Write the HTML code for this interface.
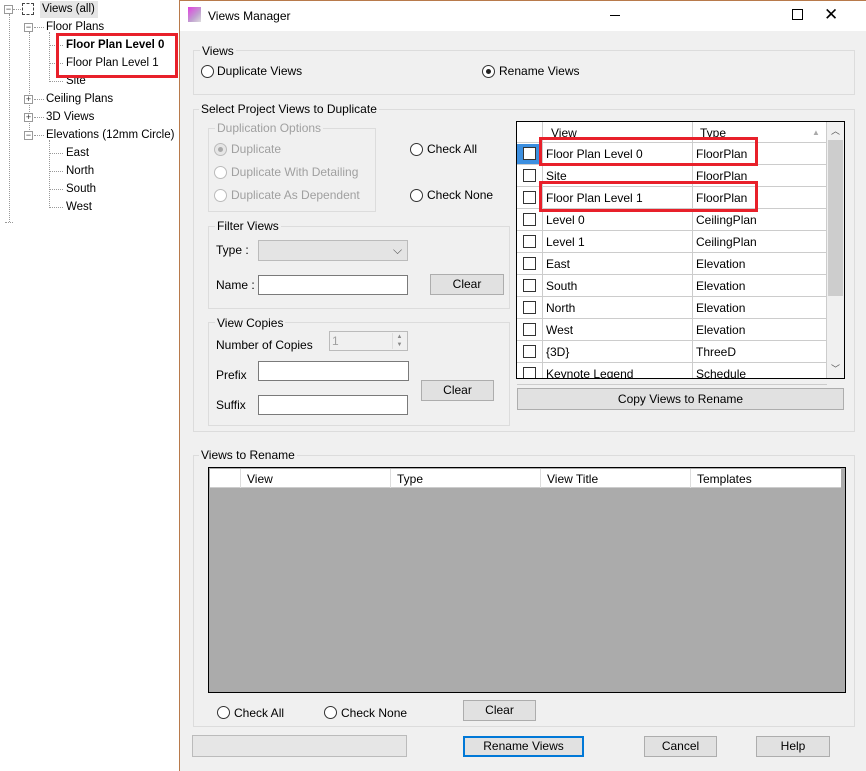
<!DOCTYPE html>
<html><head><meta charset="utf-8"><style>
*{box-sizing:border-box;margin:0;padding:0}
body{width:866px;height:771px;position:relative;overflow:hidden;background:#fff;font-family:"Liberation Sans",sans-serif;font-size:12px;color:#000}
.a{position:absolute}
.t{position:absolute;white-space:nowrap;line-height:14px}
.tr .t{font-size:11.5px}
.g{position:absolute;border:1px solid #dcdcdc}
.lbl{position:absolute;background:#f0f0f0;padding:0 2px;line-height:14px;white-space:nowrap}
.rad{position:absolute;width:13px;height:13px;border:1px solid #333;border-radius:50%;background:#fff}
.btn{position:absolute;border:1px solid #adadad;background:#e1e1e1;text-align:center;line-height:18px}
.inp{position:absolute;border:1px solid #7a7a7a;background:#fff}
.dis{color:#a0a0a0}
.cb{position:absolute;width:13px;height:13px;border:1px solid #333;background:#fff}
.red{position:absolute;border:3px solid #e8202a}
.dot{position:absolute;border-top:1px dotted #999}
.vd{position:absolute;border-left:1px dotted #999}
.pm{position:absolute;width:9px;height:9px;border:1px solid #999;background:#fff;font-size:9px;line-height:7px;text-align:center;color:#333}
</style></head><body>
<div class="tr">
<div class="a" style="left:0;top:0;width:179px;height:771px;background:#fff"></div>
<div class="vd" style="left:9px;top:14px;height:208px"></div>
<div class="dot" style="left:5px;top:222px;width:8px"></div>
<div class="pm" style="left:4px;top:5px">−</div>
<div class="dot" style="left:13px;top:9px;width:8px"></div>
<div class="a" style="left:22px;top:3px;width:12px;height:12px;border:1px dashed #444"></div>
<div class="a" style="left:40px;top:1px;width:58px;height:17px;background:#e5e5e5"></div>
<div class="t" style="left:42px;top:2px">Views (all)</div>
<div class="vd" style="left:29px;top:32px;height:104px"></div>
<div class="pm" style="left:24px;top:23px">−</div><div class="dot" style="left:34px;top:27px;width:10px"></div>
<div class="t" style="left:46px;top:20px">Floor Plans</div>
<div class="vd" style="left:49px;top:32px;height:50px"></div>
<div class="dot" style="left:49px;top:45px;width:14px"></div>
<div class="dot" style="left:49px;top:63px;width:14px"></div>
<div class="dot" style="left:49px;top:81px;width:14px"></div>
<div class="t" style="left:66px;top:38px;font-weight:bold">Floor Plan Level 0</div>
<div class="t" style="left:66px;top:56px">Floor Plan Level 1</div>
<div class="t" style="left:66px;top:74px">Site</div>
<div class="red" style="left:56px;top:33px;width:122px;height:45px"></div>
<div class="pm" style="left:24px;top:95px">+</div><div class="dot" style="left:34px;top:99px;width:10px"></div>
<div class="t" style="left:46px;top:92px">Ceiling Plans</div>
<div class="pm" style="left:24px;top:113px">+</div><div class="dot" style="left:34px;top:117px;width:10px"></div>
<div class="t" style="left:46px;top:110px">3D Views</div>
<div class="pm" style="left:24px;top:131px">−</div><div class="dot" style="left:34px;top:135px;width:10px"></div>
<div class="t" style="left:46px;top:128px">Elevations (12mm Circle)</div>
<div class="vd" style="left:49px;top:140px;height:68px"></div>
<div class="dot" style="left:49px;top:153px;width:14px"></div><div class="t" style="left:66px;top:146px">East</div>
<div class="dot" style="left:49px;top:171px;width:14px"></div><div class="t" style="left:66px;top:164px">North</div>
<div class="dot" style="left:49px;top:189px;width:14px"></div><div class="t" style="left:66px;top:182px">South</div>
<div class="dot" style="left:49px;top:207px;width:14px"></div><div class="t" style="left:66px;top:200px">West</div>
</div>

<div class="a" style="left:179px;top:0;width:687px;height:771px;background:#f0f0f0;border-left:1px solid #b87a4b;border-top:1px solid #b87a4b"></div>
<div class="a" style="left:180px;top:1px;width:686px;height:30px;background:#fff"></div>
<div class="a" style="left:188px;top:7px;width:13px;height:15px;background:linear-gradient(135deg,#e040e0,#c0a0d0 60%,#ddd)"></div>
<div class="t" style="left:208px;top:9px">Views Manager</div>
<div class="a" style="left:610px;top:15px;width:10px;border-top:1px solid #000"></div>
<div class="a" style="left:792px;top:9px;width:11px;height:11px;border:1px solid #000"></div>
<div class="t" style="left:824px;top:5px;font-size:17px;line-height:20px">✕</div>

<div class="g" style="left:193px;top:50px;width:662px;height:45px"></div>
<div class="lbl" style="left:200px;top:44px">Views</div>
<div class="rad" style="left:201px;top:65px"></div><div class="t" style="left:217px;top:64px">Duplicate Views</div>
<div class="rad" style="left:482px;top:65px"><div class="a" style="left:3px;top:3px;width:5px;height:5px;border-radius:50%;background:#222"></div></div><div class="t" style="left:499px;top:64px">Rename Views</div>

<div class="g" style="left:193px;top:109px;width:662px;height:323px"></div>
<div class="lbl" style="left:199px;top:102px">Select Project Views to Duplicate</div>
<div class="g" style="left:208px;top:128px;width:168px;height:84px"></div>
<div class="lbl dis" style="left:215px;top:121px">Duplication Options</div>
<div class="rad" style="left:214px;top:143px;border-color:#bbb;background:#e6e6e6"><div class="a" style="left:3px;top:3px;width:5px;height:5px;border-radius:50%;background:#aaa"></div></div><div class="t dis" style="left:231px;top:142px">Duplicate</div>
<div class="rad" style="left:214px;top:166px;border-color:#bbb"></div><div class="t dis" style="left:231px;top:165px">Duplicate With Detailing</div>
<div class="rad" style="left:214px;top:189px;border-color:#bbb"></div><div class="t dis" style="left:231px;top:188px">Duplicate As Dependent</div>
<div class="rad" style="left:410px;top:143px"></div><div class="t" style="left:427px;top:142px">Check All</div>
<div class="rad" style="left:410px;top:189px"></div><div class="t" style="left:427px;top:188px">Check None</div>

<div class="g" style="left:208px;top:226px;width:302px;height:83px"></div>
<div class="lbl" style="left:215px;top:219px">Filter Views</div>
<div class="t" style="left:216px;top:243px">Type :</div>
<div class="a" style="left:258px;top:240px;width:150px;height:21px;border:1px solid #bbb;background:#e4e4e4"></div>
<div class="t" style="left:393px;top:243px;color:#555">⌵</div>
<div class="t" style="left:216px;top:278px">Name :</div>
<div class="inp" style="left:258px;top:275px;width:150px;height:20px"></div>
<div class="btn" style="left:430px;top:274px;width:74px;height:21px">Clear</div>

<div class="g" style="left:208px;top:322px;width:302px;height:104px"></div>
<div class="lbl" style="left:215px;top:316px">View Copies</div>
<div class="t" style="left:216px;top:338px">Number of Copies</div>
<div class="a" style="left:329px;top:331px;width:79px;height:20px;border:1px solid #bbb;background:#f0f0f0"></div>
<div class="t dis" style="left:332px;top:334px">1</div>
<div class="a" style="left:392px;top:333px;width:14px;height:16px;border-left:1px solid #ddd;font-size:6px;color:#888;line-height:8px;text-align:center">▲<br>▼</div>
<div class="t" style="left:216px;top:368px">Prefix</div>
<div class="inp" style="left:258px;top:361px;width:151px;height:20px"></div>
<div class="t" style="left:216px;top:398px">Suffix</div>
<div class="inp" style="left:258px;top:395px;width:150px;height:20px"></div>
<div class="btn" style="left:421px;top:380px;width:73px;height:21px">Clear</div>

<div class="a" style="left:516px;top:121px;width:329px;height:258px;border:1px solid #000;background:#fff;overflow:hidden">
 <div class="a" style="left:0;top:0;width:310px;height:21px;border-bottom:1px solid #ccc"></div>
 <div class="t" style="left:34px;top:4px">View</div><div class="t" style="left:183px;top:4px">Type</div>
 <div class="t" style="left:295px;top:4px;font-size:8px;color:#aaa">▲</div>
 <div class="a" style="left:25px;top:0;height:260px;border-left:1px solid #ccc"></div>
 <div class="a" style="left:175px;top:0;height:260px;border-left:1px solid #ccc"></div>
 <div class="a" style="left:309px;top:0;height:260px;border-left:1px solid #ccc"></div>
 <div class="a" style="left:0;top:22px;width:25px;height:21px;background:#3c8fe0"></div>
</div>
<div class="a" style="left:827px;top:122px;width:17px;height:256px;background:#f0f0f0"></div>
<div class="a" style="left:828px;top:140px;width:15px;height:156px;background:#cdcdcd"></div>
<div class="t" style="left:831px;top:124px;font-size:9px;color:#555">︿</div>
<div class="t" style="left:831px;top:362px;font-size:9px;color:#555">﹀</div>

<div id="rows"></div>
<div class="red" style="left:539px;top:137px;width:219px;height:29px"></div>
<div class="red" style="left:539px;top:181px;width:219px;height:31px"></div>
<div class="btn" style="left:517px;top:388px;width:327px;height:22px;line-height:20px">Copy Views to Rename</div>

<div class="g" style="left:193px;top:455px;width:662px;height:272px"></div>
<div class="lbl" style="left:199px;top:448px">Views to Rename</div>
<div class="a" style="left:208px;top:467px;width:638px;height:226px;border:1px solid #000;background:#ababab">
 <div class="a" style="left:1px;top:1px;width:631px;height:19px;background:#fff;border-bottom:1px solid #ccc"></div>
 <div class="a" style="left:31px;top:1px;height:19px;border-left:1px solid #ddd"></div>
 <div class="a" style="left:181px;top:1px;height:19px;border-left:1px solid #ddd"></div>
 <div class="a" style="left:331px;top:1px;height:19px;border-left:1px solid #ddd"></div>
 <div class="a" style="left:481px;top:1px;height:19px;border-left:1px solid #ddd"></div>
 <div class="t" style="left:38px;top:4px">View</div><div class="t" style="left:188px;top:4px">Type</div>
 <div class="t" style="left:338px;top:4px">View Title</div><div class="t" style="left:488px;top:4px">Templates</div>
</div>
<div class="rad" style="left:217px;top:706px"></div><div class="t" style="left:234px;top:706px">Check All</div>
<div class="rad" style="left:324px;top:706px"></div><div class="t" style="left:341px;top:706px">Check None</div>
<div class="btn" style="left:463px;top:700px;width:73px;height:21px">Clear</div>

<div class="a" style="left:192px;top:735px;width:215px;height:22px;border:1px solid #bbb;background:#e6e6e6"></div>
<div class="btn" style="left:463px;top:736px;width:121px;height:21px;border:2px solid #0078d7;line-height:17px">Rename Views</div>
<div class="btn" style="left:644px;top:736px;width:73px;height:21px">Cancel</div>
<div class="btn" style="left:756px;top:736px;width:74px;height:21px">Help</div>

<script>
var d=[["Floor Plan Level 0","FloorPlan"],["Site","FloorPlan"],["Floor Plan Level 1","FloorPlan"],["Level 0","CeilingPlan"],["Level 1","CeilingPlan"],["East","Elevation"],["South","Elevation"],["North","Elevation"],["West","Elevation"],["{3D}","ThreeD"],["Keynote Legend","Schedule"]];
var h="";d.forEach(function(r,i){var y=143+22*i;
if(y<377){h+='<div class="a" style="left:517px;top:'+(y+21)+'px;width:310px;border-top:1px solid #ccc"></div>';}
h+='<div class="cb" style="left:523px;top:'+(y+4)+'px;'+(y+17>378?'height:'+(378-y-4)+'px;border-bottom:0':'')+'"></div>';
var c=y+17>378?'clip-path:inset(0 0 '+(y+17-378)+'px 0);':'';
h+='<div class="t" style="left:546px;top:'+(y+4)+'px;'+c+'">'+r[0]+'</div><div class="t" style="left:696px;top:'+(y+4)+'px;'+c+'">'+r[1]+'</div>';});
document.getElementById("rows").innerHTML=h;
</script>
</body></html>
